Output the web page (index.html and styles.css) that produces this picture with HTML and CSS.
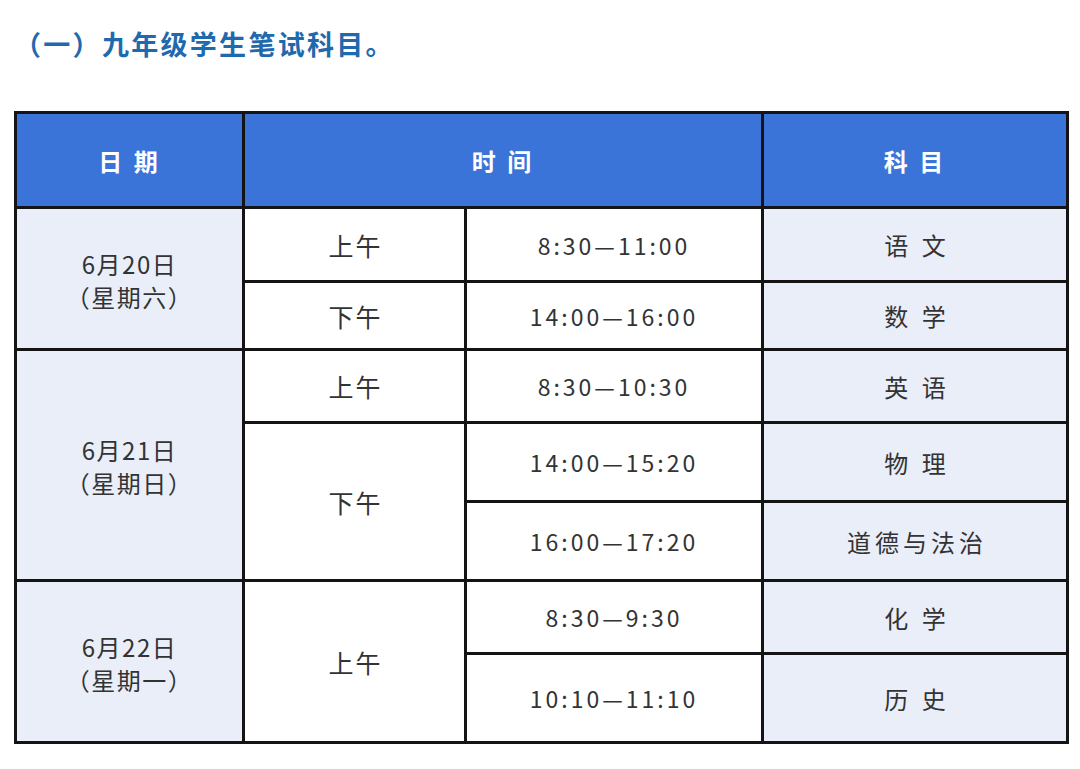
FILE: index.html
```html
<!DOCTYPE html>
<html lang="zh-CN">
<head>
<meta charset="utf-8">
<link rel="stylesheet" href="styles.css">
</head>
<body>
<div class="page">
  <h1 class="title">（一）九年级学生笔试科目。</h1>
  <div class="table">
    <div class="cell head c1">日 期</div>
    <div class="cell head c-time">时 间</div>
    <div class="cell head c4">科 目</div>

    <div class="cell date r1-2"><span>6月20日</span><span>（星期六）</span></div>
    <div class="cell half">上午</div>
    <div class="cell time">8:30—11:00</div>
    <div class="cell subj">语 文</div>

    <div class="cell half">下午</div>
    <div class="cell time">14:00—16:00</div>
    <div class="cell subj">数 学</div>

    <div class="cell date r3-5"><span>6月21日</span><span>（星期日）</span></div>
    <div class="cell half">上午</div>
    <div class="cell time">8:30—10:30</div>
    <div class="cell subj">英 语</div>

    <div class="cell half r4-5">下午</div>
    <div class="cell time">14:00—15:20</div>
    <div class="cell subj">物 理</div>

    <div class="cell time">16:00—17:20</div>
    <div class="cell subj">道德与法治</div>

    <div class="cell date r6-7"><span>6月22日</span><span>（星期一）</span></div>
    <div class="cell half r6-7b">上午</div>
    <div class="cell time">8:30—9:30</div>
    <div class="cell subj">化 学</div>

    <div class="cell time">10:10—11:10</div>
    <div class="cell subj">历 史</div>
  </div>
</div>
</body>
</html>
```

FILE: styles.css
```css
html, body {
  margin: 0;
  padding: 0;
  background: #ffffff;
}

.page {
  width: 1080px;
  height: 769px;
  padding: 25px 0 0 14px;
  box-sizing: border-box;
  font-family: "Noto Sans CJK SC", "Noto Sans", sans-serif;
  color: #333333;
}

.title {
  margin: 0;
  font-size: 27px;
  line-height: 38px;
  font-weight: 700;
  letter-spacing: 2.3px;
  color: #1f6aad;
}

.table {
  margin-top: 48px;
  width: 1055px;
  display: grid;
  grid-template-columns: 225px 219px 294px 302px;
  grid-template-rows: 92px 71px 65px 70px 76px 76px 70px 86px;
  gap: 3px;
  padding: 3px;
  box-sizing: border-box;
  background: #141414;
}

.cell {
  display: flex;
  align-items: center;
  justify-content: center;
  background: #ffffff;
  font-size: 24px;
  letter-spacing: 2px;
  color: #333333;
}

.head {
  background: #3b74d8;
  color: #ffffff;
  font-weight: 700;
  font-size: 24px;
  letter-spacing: 3px;
}

.c-time {
  grid-column: 2 / span 2;
}

.date {
  flex-direction: column;
  background: #e9eef9;
  font-size: 24px;
  line-height: 33px;
  letter-spacing: 1.5px;
  padding-top: 2px;
}

.r1-2 { grid-row: 2 / span 2; }
.r3-5 { grid-row: 4 / span 3; }
.r4-5 { grid-row: 5 / span 2; }
.r6-7 { grid-row: 7 / span 2; }
.r6-7b { grid-row: 7 / span 2; }

.half {
  font-size: 25px;
  letter-spacing: 2px;
  padding-left: 2px;
}

.time {
  letter-spacing: 3px;
  font-size: 23px;
}

.subj {
  background: #e9eef9;
  letter-spacing: 4px;
  font-size: 24px;
  padding-left: 4px;
}
```
